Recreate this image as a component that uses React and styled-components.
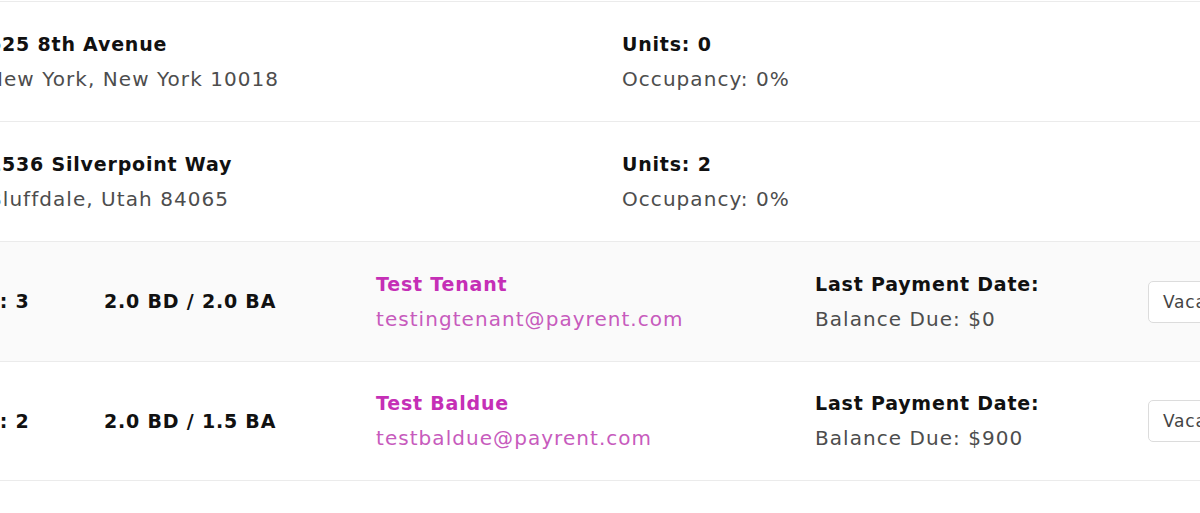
import React from 'react';
import styled, { createGlobalStyle } from 'styled-components';

const GlobalStyle = createGlobalStyle`
  body {
    margin: 0;
    background: #fff;
    overflow: hidden;
    font-family: 'DejaVu Sans', 'Open Sans', sans-serif;
  }
`;

const Page = styled.div`
  margin-left: -48px;
  margin-top: 1px;
  width: 1400px;
`;

const Row = styled.div`
  display: grid;
  grid-template-columns: ${(p) => p.$cols};
  align-items: center;
  height: 120px;
  box-sizing: border-box;
  border-top: 1px solid #ebebeb;
  padding-left: ${(p) => p.$indent || 0}px;
  background: ${(p) => (p.$shaded ? '#fafafa' : '#fff')};
  &:last-child {
    border-bottom: 1px solid #ebebeb;
  }
`;

const Stack = styled.div`
  display: flex;
  flex-direction: column;
  gap: 8px;
`;

const Title = styled.div`
  font-size: 19px;
  font-weight: 700;
  letter-spacing: 0.8px;
  color: ${(p) => p.$color || '#111'};
  line-height: 27px;
  white-space: nowrap;
`;

const Sub = styled.div`
  font-size: 20px;
  font-weight: 400;
  letter-spacing: 1.05px;
  color: ${(p) => p.$color || '#4d4d4d'};
  line-height: 27px;
  white-space: nowrap;
`;

const Button = styled.button`
  justify-self: start;
  height: 42px;
  padding: 0 14px;
  font-family: inherit;
  font-size: 17px;
  letter-spacing: 0.8px;
  color: #444;
  background: #fff;
  border: 1px solid #dcdcdc;
  border-radius: 5px;
`;

const properties = [
  { street: '625 8th Avenue', city: 'New York, New York 10018', units: 0, occupancy: '0%' },
  { street: '1536 Silverpoint Way', city: 'Bluffdale, Utah 84065', units: 2, occupancy: '0%' },
];

const units = [
  { num: 3, rooms: '2.0 BD / 2.0 BA', name: 'Test Tenant', email: 'testingtenant@payrent.com', balance: '$0' },
  { num: 2, rooms: '2.0 BD / 1.5 BA', name: 'Test Baldue', email: 'testbaldue@payrent.com', balance: '$900' },
];

export default function App() {
  return (
    <>
      <GlobalStyle />
      <Page>
        {properties.map((p) => (
          <Row key={p.street} $cols="634px 1fr" $indent={36}>
            <Stack>
              <Title>{p.street}</Title>
              <Sub>{p.city}</Sub>
            </Stack>
            <Stack>
              <Title>Units: {p.units}</Title>
              <Sub>Occupancy: {p.occupancy}</Sub>
            </Stack>
          </Row>
        ))}
        {units.map((u, i) => (
          <Row key={u.num} $cols="152px 272px 439px 333px 1fr" $shaded={i === 0}>
            <Title>Unit: {u.num}</Title>
            <Title>{u.rooms}</Title>
            <Stack>
              <Title $color="#c52fb6">{u.name}</Title>
              <Sub $color="#c75bbd">{u.email}</Sub>
            </Stack>
            <Stack>
              <Title>Last Payment Date:</Title>
              <Sub>Balance Due: {u.balance}</Sub>
            </Stack>
            <Button>Vacate</Button>
          </Row>
        ))}
      </Page>
    </>
  );
}
